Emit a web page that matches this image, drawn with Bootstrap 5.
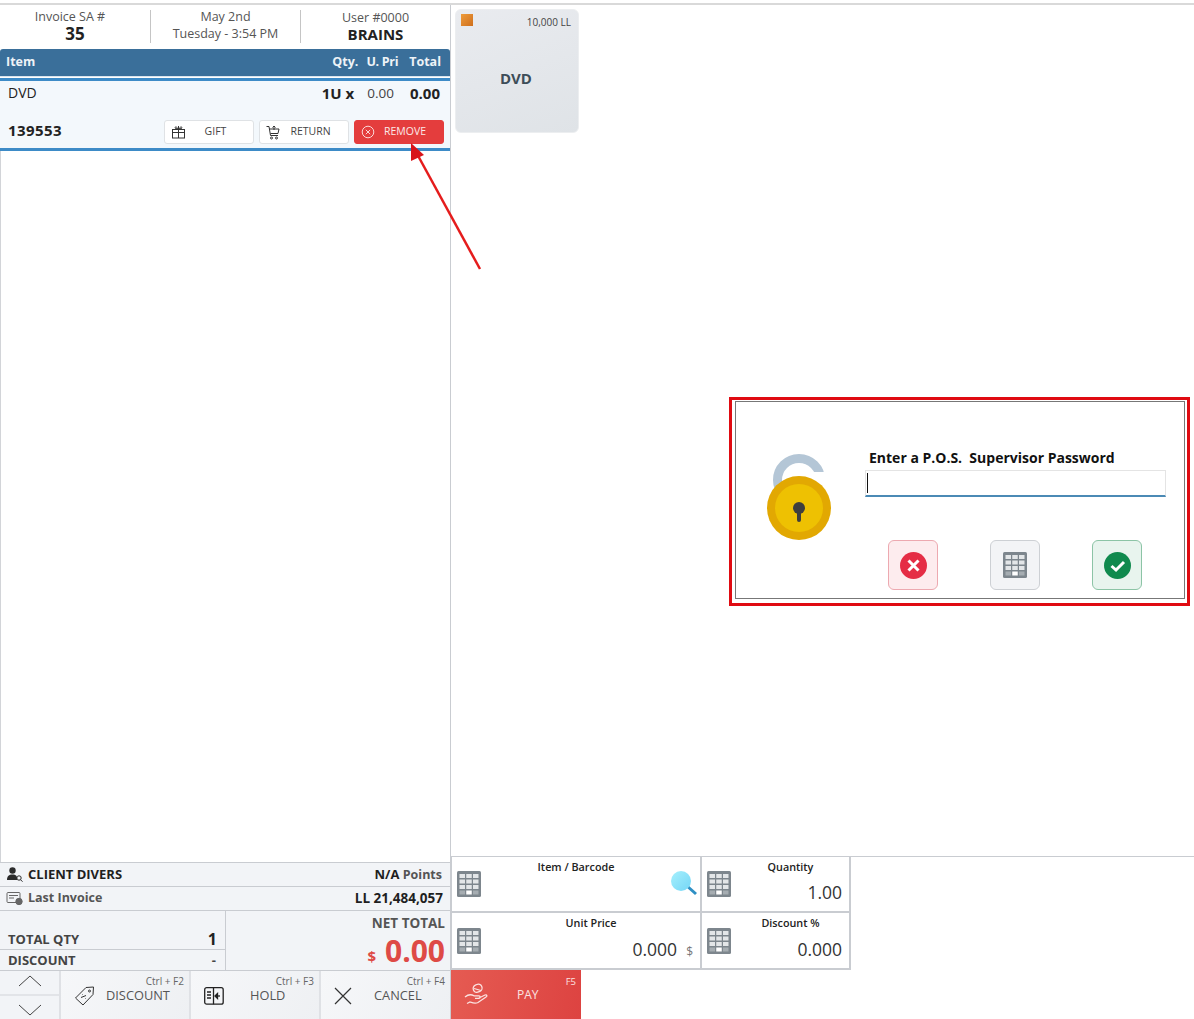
<!DOCTYPE html>
<html lang="en">
<head>
  <meta charset="UTF-8">
  <meta name="viewport" content="width=device-width, initial-scale=1">
  <title>POS</title>
  <link href="https://cdn.jsdelivr.net/npm/bootstrap@5.3.3/dist/css/bootstrap.min.css" rel="stylesheet">
  <style>
    html, body { height: 100%; }
    body {
      font-family: "Open Sans", "Noto Sans", sans-serif;
      font-size: 13px;
      color: #222;
      background: #fff;
      overflow: hidden;
      position: relative;
    }
    .pos-screen { width: 1194px; height: 1019px; padding-top: 3px; }
    .top-rule { height: 2px; background: #d9d9d9; }
    .left-pane { width: 451px; flex: none; border-right: 1px solid #c9ccd1; }
    .head-info { height: 44px; padding-top: 5px; }
    .head-cell { width: 150px; height: 33px; text-align: center; line-height: 15px; color: #555; font-size: 12.5px; }
    .head-cell + .head-cell { border-left: 1px solid #c5c5c5; }
    .head-text { margin-top: -1px; }
    .head-shift { display: block; padding-right: 10px; }
    .head-line { display: block; line-height: 19px; }
    .head-cell strong { display: block; color: #222; font-size: 15px; line-height: 18px; }
    .head-cell strong.head-big { font-size: 17px; margin-top: 1px; }
    .item-head {
      height: 28px; background: #3a6f9a; color: #eef3f7; font-weight: 700; font-size: 12.5px;
      padding: 0 9px 0 6px; border-radius: 3px 3px 0 0;
      border-bottom: 1px solid #d8e4ee;
    }
    .item-head span + span { margin-left: 8px; }
    .item-head .head-tight { letter-spacing: -.3px; margin-right: 3px; }
    .item-row {
      height: 73px; background: #f3f8fc; border-top: 3px solid #3d8bc7; border-bottom: 3px solid #3d8bc7;
      margin-top: 1px; padding: 2px 6px 0 8px;
    }
    .item-name { font-size: 14px; line-height: 20px; }
    .item-num { font-size: 15px; line-height: 20px; }
    .item-price { font-size: 13.5px; color: #444; margin: 0 16px 0 13px; }
    .item-code { font-size: 15px; line-height: 18px; font-weight: 700; letter-spacing: .4px; margin-bottom: 4px; }
    .act-row { gap: 5px; margin-bottom: 4px; }
    .act-btn {
      width: 90px; height: 24px; border: 1px solid #dfe2e5; border-radius: 3px; background: #fff;
      font-size: 10.5px; color: #444; padding: 0 0 0 6px;
    }
    .act-btn .act-label { flex: 1; text-align: center; padding-right: 8px; }
    .act-danger { background: #e43d3d; border-color: #e43d3d; color: #fbe9e9; }
    .item-empty { border-left: 1px solid #d2d4d8; }
    .sum-row {
      height: 24px; background: #f2f4f7; border-top: 1px solid #c9ccd1; padding: 0 8px 0 6px;
      font-weight: 700; font-size: 13px; color: #1f1f1f;
    }
    .sum-tot { font-size: 13.5px; margin-right: -1px; }
    .sum-muted { color: #555; font-size: 12.5px; }
    .totals { height: 60px; background: #f2f4f7; border-top: 1px solid #c9ccd1; }
    .totals-left { width: 226px; border-right: 1px solid #c9ccd1; }
    .qty-row { height: 39px; padding: 0 8px; align-items: flex-end; color: #444; font-weight: 700; font-size: 13px; border-bottom: 1px solid #c9ccd1; }
    .disc-row { height: 21px; padding: 0 9px 0 8px; color: #444; font-weight: 700; font-size: 13px; align-items: center; }
    .qty-val { color: #222; font-size: 16px; line-height: 20px; }
    .net-label { color: #555; font-weight: 700; font-size: 13.5px; line-height: 18px; padding-top: 3px; }
    .net-val { color: #de4a46; font-weight: 700; font-size: 30px; line-height: 36px; margin-top: 1px; }
    .net-cur { font-size: 15px; margin-right: 9px; }
    .totals-right { padding-right: 5px; }
    .foot-bar { height: 49px; border-top: 1px solid #c9ccd1; background: #f2f4f7; }
    .arrows { width: 61px; border-right: 2px solid #dfe1e5; }
    .arrows > div { flex: 1; }
    .arrows > div:first-child { padding-bottom: 4px; }
    .arrows > div + div { border-top: 2px solid #e2e4e8; padding-top: 4px; }
    .foot-btn { position: relative; width: 130px; background: linear-gradient(120deg, #f6f7f9, #eef0f3); border-right: 2px solid #dfe1e5; color: #555; font-size: 12.8px; padding: 2px 0 0 13px; gap: 18px; }
    .foot-btn:last-child { border-right: 0; width: 129px; }
    .foot-key { position: absolute; top: 3px; right: 5px; font-size: 10px; color: #666; }
    .foot-label { margin-left: -7px; }
    .tile {
      position: relative; width: 124px; height: 124px; margin: 4px 0 0 4px; border-radius: 6px; padding: 14px 2px 0 0;
      background: linear-gradient(160deg, #e9ebef, #dfe3e7); border: 1px solid #eceef0;
    }
    .tile-swatch { position: absolute; left: 5px; top: 4px; width: 12px; height: 12px; background: linear-gradient(135deg, #ee9c3b, #cf6f1d); }
    .tile-price { position: absolute; right: 7px; top: 5px; font-size: 10px; color: #444; }
    .tile-name { font-size: 15px; font-weight: 700; color: #3d4d58; }
    .entry-zone { border-top: 1px solid #c9ccd1; }
    .entry-grid { display: grid; grid-template-columns: 251px 149px; grid-template-rows: 56px 57px; width: 400px; }
    .entry-cell { position: relative; border-right: 2px solid #c9ccd1; border-bottom: 2px solid #c9ccd1; border-left: 1px solid #c9ccd1; }
    .entry-cell:nth-child(even) { border-left: 0; }
    .entry-cap { font-size: 10.8px; font-weight: 600; text-align: center; line-height: 14px; padding-top: 3px; color: #222; }
    .cap-right { padding-left: 30px; }
    .entry-val { position: absolute; right: 7px; bottom: 7px; font-size: 17.5px; line-height: 24px; color: #333; }
    .entry-cur { font-size: 12px; line-height: 1; color: #777; margin-left: 9px; }
    .pad-icon { position: absolute; left: 5px; top: 15px; }
    .entry-cell:nth-child(-n+2) .pad-icon { top: 14px; }
    .find-icon { position: absolute; right: 1px; top: 11px; }
    .pay-btn { position: relative; width: 130px; height: 49px; background: linear-gradient(100deg, #e55b52, #dd4341); color: #fbe3e1; font-size: 12px; padding-left: 13px; gap: 29px; }
    .pay-key { position: absolute; right: 5px; top: 5px; font-size: 9.5px; }
    .note-arrow { position: absolute; left: 405px; top: 140px; }
    .pw-frame { position: absolute; left: 729px; top: 397px; width: 461px; height: 209px; border: 3px solid #e00b12; background: #fff; padding: 1px 2px 4px 3px; }
    .pw-box { height: 100%; border: 1px solid #777; position: relative; padding: 45px 18px 0 31px; }
    .pw-lock { width: 98px; flex: none; padding-top: 7px; }
    .pw-title { font-weight: 700; font-size: 14px; color: #111; line-height: 22px; padding-left: 4px; margin-bottom: 1px; }
    .pw-input { height: 27px; border: 1px solid #e4e4e4; border-bottom: 2px solid #4b8ab5; position: relative; }
    .pw-caret { position: absolute; left: 1px; top: 2px; width: 1px; height: 20px; background: #111; }
    .pw-btns { position: absolute; left: 152px; top: 138px; width: 254px; justify-content: space-between; }
    .pw-btn { width: 50px; height: 50px; border-radius: 6px; border: 1px solid; }
    .pw-no { background: #fdecee; border-color: #eda9b0; }
    .pw-pad { background: #f3f4f6; border-color: #cdd0d4; }
    .pw-yes { background: #e8f4ee; border-color: #8cc4a6; }
  </style>
</head>
<body>

<svg width="0" height="0" class="position-absolute">
  <defs>
    <symbol id="pad" viewBox="0 0 24 26">
      <rect width="24" height="26" rx="1.5" fill="#7d868d"/>
      <g fill="#e3e6e8">
        <rect x="2.5" y="3" width="5.500" height="4"/><rect x="9.250" y="3" width="5.500" height="4"/><rect x="16" y="3" width="5.500" height="4"/>
        <rect x="2.5" y="8.500" width="5.500" height="4"/><rect x="9.250" y="8.500" width="5.500" height="4"/><rect x="16" y="8.500" width="5.500" height="4"/>
        <rect x="2.5" y="14" width="5.500" height="4"/><rect x="9.250" y="14" width="5.500" height="4"/><rect x="16" y="14" width="5.500" height="4"/>
      </g>
      <rect x="2.5" y="19.500" width="5.500" height="4" fill="#a6adb2"/><rect x="9.250" y="19.500" width="5.500" height="4" fill="#fff"/><rect x="16" y="19.500" width="5.500" height="4" fill="#a6adb2"/>
    </symbol>
    <linearGradient id="findFill" x1="0" y1="0" x2="1" y2="1">
      <stop offset="0" stop-color="#a6f0fd"/><stop offset="1" stop-color="#74d6f6"/>
    </linearGradient>
  </defs>
</svg>

<div class="pos-screen d-flex flex-column">
  <div class="top-rule"></div>
  <div class="d-flex flex-grow-1">

    <!-- left side -->
    <div class="left-pane d-flex flex-column">
      <div class="head-info d-flex">
        <div class="head-cell"><div class="head-text"><span class="head-shift">Invoice SA #</span><strong class="head-big">35</strong></div></div>
        <div class="head-cell"><div class="head-text">May 2nd<span class="head-line">Tuesday - 3:54 PM</span></div></div>
        <div class="head-cell">User #0000<strong>BRAINS</strong></div>
      </div>
      <div class="item-head d-flex align-items-center">
        <span class="me-auto">Item</span><span>Qty.</span><span class="head-tight">U. Pri</span><span>Total</span>
      </div>
      <div class="item-row d-flex flex-column">
        <div class="d-flex align-items-center pe-1">
          <span class="item-name me-auto">DVD</span>
          <strong class="item-num">1U x</strong>
          <span class="item-price">0.00</span>
          <strong class="item-num">0.00</strong>
        </div>
        <div class="act-row d-flex align-items-center mt-auto">
          <span class="item-code me-auto">139553</span>
          <div class="act-btn d-flex align-items-center">
            <svg width="15" height="14" viewBox="0 0 15 14" fill="none" stroke="#333"><rect x="1.5" y="4.500" width="12" height="8.500"/><path d="M1.500 7.500h12M7.500 1v12M7.500 4C5 1 3.500 1.500 4.500 3.500zM7.500 4c2.500-3 4-2.500 3-.5z"/></svg>
            <span class="act-label">GIFT</span>
          </div>
          <div class="act-btn d-flex align-items-center">
            <svg width="15" height="15" viewBox="0 0 15 15" fill="none" stroke="#333"><path d="M.5 1.500h2.500l1.500 9h7.500M3.500 4h9.500l-1 4.500H4.500M8 1v4M6.500 2.500 8 1l1.500 1.500"/><circle cx="5.500" cy="13" r="1"/><circle cx="10.500" cy="13" r="1"/></svg>
            <span class="act-label">RETURN</span>
          </div>
          <div class="act-btn act-danger d-flex align-items-center">
            <svg width="14" height="14" viewBox="0 0 14 14" fill="none" stroke="#fbd9d9"><circle cx="7" cy="7" r="5.800"/><path d="M4.800 4.800l4.400 4.400M9.200 4.800l-4.400 4.400"/></svg>
            <span class="act-label">REMOVE</span>
          </div>
        </div>
      </div>
      <div class="item-empty flex-grow-1"></div>
      <div class="sum-row d-flex align-items-center">
        <svg class="me-1" width="18" height="15" viewBox="0 0 17 15"><circle cx="6" cy="3.500" r="3.200" fill="#2b2b2b"/><path d="M.5 13c0-4 2-5.500 5.500-5.500S11 9 10.500 13z" fill="#2b2b2b"/><circle cx="12.500" cy="11" r="2.200" fill="none" stroke="#2b2b2b"/><path d="M14 12.700l2 2" stroke="#2b2b2b"/></svg>
        <span class="me-auto">CLIENT DIVERS</span>
        <span>N/A <span class="sum-muted">Points</span></span>
      </div>
      <div class="sum-row d-flex align-items-center">
        <svg class="me-1" width="18" height="15" viewBox="0 0 17 15" fill="none" stroke="#666"><rect x=".5" y="1.500" width="13" height="10" rx="1"/><path d="M2.500 4.500h9M2.500 7h5"/><circle cx="12.500" cy="10.500" r="3.200" fill="#666"/></svg>
        <span class="sum-muted me-auto">Last Invoice</span>
        <span class="sum-tot">LL 21,484,057</span>
      </div>
      <div class="totals d-flex">
        <div class="totals-left">
          <div class="qty-row d-flex justify-content-between"><span>TOTAL QTY</span><span class="qty-val">1</span></div>
          <div class="disc-row d-flex justify-content-between"><span>DISCOUNT</span><span>-</span></div>
        </div>
        <div class="totals-right flex-grow-1 text-end">
          <div class="net-label">NET TOTAL</div>
          <div class="net-val"><span class="net-cur">$</span>0.00</div>
        </div>
      </div>
      <div class="foot-bar d-flex">
        <div class="arrows d-flex flex-column">
          <div class="d-flex align-items-center justify-content-center"><svg width="24" height="12" viewBox="0 0 24 12" fill="none" stroke="#444"><path d="M1 11 12 1l11 10"/></svg></div>
          <div class="d-flex align-items-center justify-content-center"><svg width="24" height="12" viewBox="0 0 24 12" fill="none" stroke="#444"><path d="M1 1l11 10L23 1"/></svg></div>
        </div>
        <div class="foot-btn d-flex align-items-center">
          <span class="foot-key">Ctrl + F2</span>
          <svg width="21" height="21" viewBox="0 0 21 21" fill="none" stroke="#333"><path d="M12 1.500l7.500-.5-.5 7.500L9 19 1.500 12z"/><circle cx="15.500" cy="5" r="1"/><path d="M7 11.500l5-2M8 8.500h.5M11 12.500h.5"/></svg>
          <span class="foot-label">DISCOUNT</span>
        </div>
        <div class="foot-btn d-flex align-items-center">
          <span class="foot-key">Ctrl + F3</span>
          <svg width="20" height="18" viewBox="0 0 20 18" fill="none" stroke="#222" stroke-width="1.300"><rect x=".7" y=".7" width="18.500" height="16.500" rx="2"/><path d="M9.500.7v16.500M3 5h4M3 8h4M3 11h4"/><path d="M16 9h-3"/><path d="M13.500 6.500 11 9l2.500 2.500z" fill="#222"/></svg>
          <span class="ms-2">HOLD</span>
        </div>
        <div class="foot-btn d-flex align-items-center">
          <span class="foot-key">Ctrl + F4</span>
          <svg width="18" height="18" viewBox="0 0 18 18" fill="none" stroke="#333" stroke-width="1.200"><path d="M1 1l16 16M17 1 1 17"/></svg>
          <span class="ms-1">CANCEL</span>
        </div>
      </div>
    </div>

    <!-- right side -->
    <div class="flex-grow-1 d-flex flex-column">
      <div class="tile d-flex align-items-center justify-content-center">
        <span class="tile-swatch"></span>
        <span class="tile-price">10,000 LL</span>
        <span class="tile-name">DVD</span>
      </div>
      <div class="flex-grow-1"></div>
      <div class="entry-zone">
        <div class="entry-grid">
          <div class="entry-cell">
            <svg class="pad-icon" width="24" height="26"><use href="#pad"/></svg>
            <div class="entry-cap">Item / Barcode</div>
            <svg class="find-icon" width="30" height="30" viewBox="0 0 30 30"><path d="M18 18l9 8" stroke="#2e8fc4" stroke-width="3"/><circle cx="12" cy="13" r="10" fill="url(#findFill)"/></svg>
          </div>
          <div class="entry-cell">
            <svg class="pad-icon" width="24" height="26"><use href="#pad"/></svg>
            <div class="entry-cap cap-right">Quantity</div>
            <div class="entry-val">1.00</div>
          </div>
          <div class="entry-cell">
            <svg class="pad-icon" width="24" height="26"><use href="#pad"/></svg>
            <div class="entry-cap cap-right">Unit Price</div>
            <div class="entry-val">0.000<span class="entry-cur">$</span></div>
          </div>
          <div class="entry-cell">
            <svg class="pad-icon" width="24" height="26"><use href="#pad"/></svg>
            <div class="entry-cap cap-right">Discount %</div>
            <div class="entry-val">0.000</div>
          </div>
        </div>
        <div class="pay-btn d-flex align-items-center">
          <span class="pay-key">F5</span>
          <svg width="24" height="24" viewBox="0 0 24 24" fill="none" stroke="#fbe3e1" stroke-width="1.300"><rect x="9" y="1.500" width="9" height="7.500" rx="3.700" transform="rotate(-25 13.500 5)"/><path d="M10 5.500l7 2"/><path d="M1 14c3-2.500 6-3 9-1.200h5c1.500 0 1.500 2.500 0 2.500h-4M15 15l6-3c2-.7 2.500 1.200 1 2l-8 5.500c-3 1.500-6 .2-8-.5l-3 1.500"/></svg>
          <span>PAY</span>
        </div>
      </div>
    </div>
  </div>
</div>

<!-- red note arrow -->
<svg class="note-arrow" width="80" height="132" viewBox="0 0 80 132">
  <path d="M75 129 11 12" stroke="#e51c1c" stroke-width="2.500"/>
  <path d="M6 3 6 21 19 15z" fill="#d8141a"/>
</svg>

<!-- password prompt -->
<div class="pw-frame">
  <div class="pw-box d-flex">
    <div class="pw-lock">
      <svg width="66" height="88" viewBox="0 0 66 88">
        <circle cx="32" cy="26" r="21.500" fill="none" stroke="#b4c6d6" stroke-width="9"/>
        <rect x="32" y="18" width="34" height="24" fill="#fff"/>
        <circle cx="32" cy="54" r="32" fill="#e2a802"/>
        <circle cx="32" cy="54" r="24" fill="#eec102"/>
        <circle cx="32" cy="54" r="6" fill="#3e3e3e"/>
        <rect x="30" y="56" width="4" height="12" rx="2" fill="#3e3e3e"/>
      </svg>
    </div>
    <div class="flex-grow-1">
      <div class="pw-title">Enter a P.O.S.&nbsp; Supervisor Password</div>
      <div class="pw-input"><span class="pw-caret"></span></div>
    </div>
    <div class="pw-btns d-flex">
      <div class="pw-btn pw-no d-flex align-items-center justify-content-center">
        <svg width="27" height="27" viewBox="0 0 27 27"><circle cx="13.500" cy="13.500" r="13.500" fill="#e52d45"/><path d="M8.500 8.500l10 10M18.500 8.500l-10 10" stroke="#fff" stroke-width="3"/></svg>
      </div>
      <div class="pw-btn pw-pad d-flex align-items-center justify-content-center">
        <svg width="24" height="26"><use href="#pad"/></svg>
      </div>
      <div class="pw-btn pw-yes d-flex align-items-center justify-content-center">
        <svg width="27" height="27" viewBox="0 0 27 27"><circle cx="13.500" cy="13.500" r="13.500" fill="#108a4e"/><path d="M7.500 14l4.500 4 8-8" fill="none" stroke="#fff" stroke-width="3"/></svg>
      </div>
    </div>
  </div>
</div>

<script src="https://cdn.jsdelivr.net/npm/bootstrap@5.3.3/dist/js/bootstrap.bundle.min.js"></script>
</body>
</html>
